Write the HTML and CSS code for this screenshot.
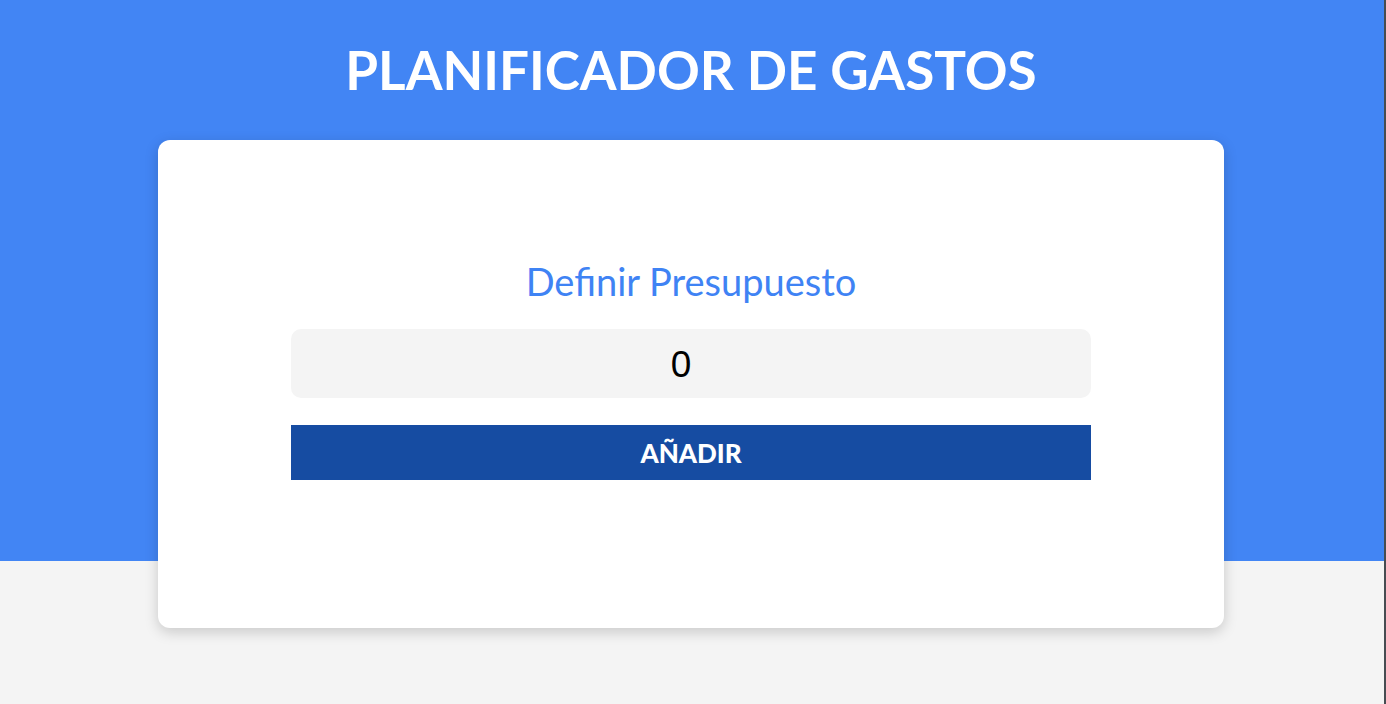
FILE: index.html
```html
<!DOCTYPE html>
<html lang="es">
<head>
<meta charset="utf-8">
<title>Planificador de Gastos</title>
<link rel="stylesheet" href="styles.css">
</head>
<body>
<div class="page">
  <header class="hero">
    <h1 class="hero-title">PLANIFICADOR DE GASTOS</h1>
  </header>
  <div class="content">
    <main class="card">
      <form class="budget-form">
        <h2 class="budget-label">Definir Presupuesto</h2>
        <input class="budget-input" type="text" value="0">
        <button class="budget-button" type="button">AÑADIR</button>
      </form>
    </main>
  </div>
</div>
<div class="edge"></div>
</body>
</html>
```

FILE: styles.css
```css
* { box-sizing: border-box; }

html, body {
  margin: 0;
  height: 100%;
}

body {
  display: flex;
  background: #f4f4f4;
  font-family: "Lato", "Liberation Sans", sans-serif;
  overflow: hidden;
}

.page {
  flex: 1;
  min-width: 0;
}

.edge {
  width: 2px;
  background: #474c52;
  flex: none;
}

.hero {
  background: #4285f4;
  height: 561px;
  padding: 36px 2px 0 0;
}

.hero-title {
  margin: 0;
  color: #fff;
  text-align: center;
  font-size: 53px;
  font-weight: 700;
  line-height: 67px;
}

.content {
  padding-right: 2px;
}

.card {
  width: 1066px;
  margin: -421px auto 0;
  background: #fff;
  border-radius: 12px;
  box-shadow: 0 4px 14px rgba(0, 0, 0, 0.18);
  padding: 121px 133px 148px;
  height: 488px;
  position: relative;
}

.budget-form {
  display: flex;
  flex-direction: column;
}

.budget-label {
  margin: 0 0 28px;
  color: #3f83f4;
  font-weight: 400;
  font-size: 38px;
  line-height: 40px;
  text-align: center;
}

.budget-input {
  height: 69px;
  border: none;
  border-radius: 10px;
  background: #f4f4f4;
  text-align: center;
  font-family: "Liberation Sans", Arial, sans-serif;
  font-size: 37px;
  color: #000;
  outline: none;
  margin-bottom: 27px;
  padding: 2px 20px 0 0;
}

.budget-button {
  height: 55px;
  border: none;
  background: #164ca2;
  color: #fff;
  font-family: "Lato", sans-serif;
  font-weight: 900;
  font-size: 26px;
  padding: 0;
}
```
